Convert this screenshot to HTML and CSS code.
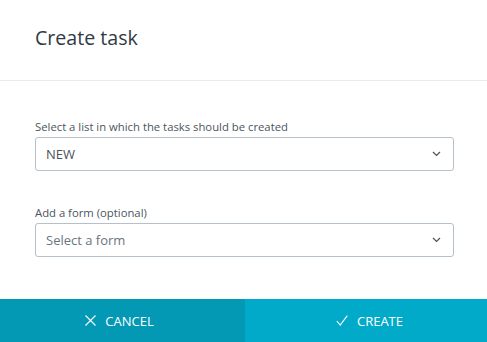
FILE: index.html
```html
<!DOCTYPE html>
<html>
<head>
    <title>Create task</title>
    <link rel="stylesheet" href="styles.css">
</head>
<body>
    <div class="dialog">
        <!-- Header -->
        <div class="dialog-header">
            <h1>Create task</h1>
        </div>

        <!-- Form fields -->
        <div class="dialog-body">
            <div class="field">
                <label>Select a list in which the tasks should be created</label>
                <div class="select">
                    <span class="value">NEW</span>
                    <svg class="chevron" width="9" height="6" viewBox="0 0 9 6"><path d="M1 1l3.5 3.5L8 1" fill="none" stroke="#4a525a" stroke-width="1.2"/></svg>
                </div>
            </div>
            <div class="field">
                <label>Add a form (optional)</label>
                <div class="select">
                    <span class="placeholder">Select a form</span>
                    <svg class="chevron" width="9" height="6" viewBox="0 0 9 6"><path d="M1 1l3.5 3.5L8 1" fill="none" stroke="#4a525a" stroke-width="1.2"/></svg>
                </div>
            </div>
        </div>

        <!-- Footer buttons -->
        <div class="dialog-footer">
            <button class="btn btn-cancel">
                <svg width="11" height="11" viewBox="0 0 11 11"><path d="M0.5 0.5l10 10M10.5 0.5l-10 10" stroke="#fff" stroke-width="1.1"/></svg>
                CANCEL
            </button>
            <button class="btn btn-create">
                <svg width="12" height="11" viewBox="0 0 12 11"><path d="M0.8 6l3.4 4L11.3 0.6" fill="none" stroke="#fff" stroke-width="1.1"/></svg>
                CREATE
            </button>
        </div>
    </div>
</body>
</html>
```

FILE: styles.css
```css
body {
    margin: 0;
    font-family: "Open Sans", Arial, sans-serif;
    background-color: #fff;
    color: #333b43;
}
.dialog {
    width: 487px;
    height: 342px;
    display: flex;
    flex-direction: column;
}
/* Header */
.dialog-header {
    height: 81px;
    box-sizing: border-box;
    padding: 24px 36px 0 35px;
    border-bottom: 1px solid #e9ecef;
}
.dialog-header h1 {
    margin: 0;
    font-size: 19.6px;
    font-weight: 400;
    line-height: 28px;
    color: #2f3a44;
}
/* Body */
.dialog-body {
    flex: 1;
    padding: 37px 33px 0 35px;
}
.field {
    margin-bottom: 33px;
}
.field label {
    display: block;
    font-size: 11.3px;
    line-height: 17px;
    color: #4a5560;
    margin-bottom: 2px;
}
.select {
    height: 34px;
    box-sizing: border-box;
    border: 1px solid #b5c0c8;
    border-radius: 3px;
    padding: 0 12px 0 10px;
    display: flex;
    align-items: center;
    justify-content: space-between;
    font-size: 13px;
}
.select .value {
    color: #49525a;
}
.select .placeholder {
    color: #6b747c;
}
/* Footer */
.dialog-footer {
    display: flex;
    height: 43px;
}
.btn {
    border: none;
    margin: 0;
    color: #fff;
    font-family: "Open Sans", Arial, sans-serif;
    font-size: 13px;
    display: flex;
    align-items: center;
    justify-content: center;
    gap: 9px;
    cursor: pointer;
}
.btn-cancel {
    width: 245px;
    padding: 0 6px 0 0;
    background-color: #0399b5;
}
.btn-create {
    flex: 1;
    padding: 0 0 0 7px;
    background-color: #02aaca;
}
```
